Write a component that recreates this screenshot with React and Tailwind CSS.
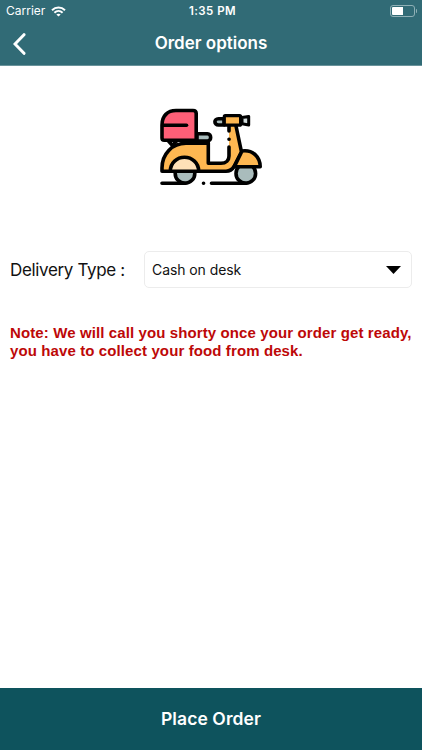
function WifiIcon() {
  return (
    <svg className="w-[15px] h-[11px]" viewBox="0 0 15 11" fill="none" stroke="white" strokeWidth="2">
      <path d="M1 4.2C4.7 .7 10.3 .7 14 4.2" />
      <path d="M3.4 6.7C5.8 4.5 9.2 4.5 11.6 6.7" />
      <path d="M7.5 10.6L5.3 8.5C6.5 7.4 8.5 7.4 9.7 8.5Z" fill="white" stroke="none" />
    </svg>
  );
}

function ScooterIcon() {
  return (
    <svg className="w-[120px] h-[95px] mr-[2px]" viewBox="0 0 120 95" fill="none" stroke="black" strokeWidth="3.6" strokeLinecap="round" strokeLinejoin="round">
      {/* wheels and ground */}
      <circle cx="35" cy="73.4" r="9.8" fill="#a9bcbc" />
      <circle cx="95.8" cy="73.4" r="9.8" fill="#a9bcbc" />
      <path d="M12 83.300H35M61.500 83.300H95.800M53.500 83.300h.1" />

      {/* body */}
      <path d="M79 26H86L91.500 52L84 67C81.500 70 80 71.200 76 71.200H12V68C12 54 22 43.300 36 43.300H58.300V63.300H71C76 63.300 79 60 79 56Z" fill="#feb751" stroke="none" />
      <path d="M86 26L91.500 52L84 66.500C82 70 80 71.200 76 71.200H12V68C12 54 22 43.300 36 43.300H58.300" />
      <path d="M58.300 43V63.300H71C76 63.300 79 60 79 56V47M79 39.200h.1M79 26V31" />
      <path d="M20.300 71.200C20.300 63 27 57.200 34.500 57.200S48.700 63 48.700 71.200Z" fill="#fee0b7" />
      <path d="M84.300 66.700L92 51C103 49.500 110 57 110.200 66.700Z" fill="#feb751" />

      {/* seat and delivery box */}
      <path d="M47 33.800H57.500C61.700 33.800 61.700 41 57.500 41H47Z" fill="#a9bcbc" />
      <path d="M18.500 41L22.500 45.500L26.500 41" fill="white" />
      <path d="M12 38V25C12 16 17.500 10.500 26 10.500H43C45.200 10.500 46.200 11.500 46.200 13.500V40.200H14.200C12.700 40.200 12 39.500 12 38Z" fill="#fe5f77" />
      <path d="M13 25.200H36.500" />

      {/* handlebar */}
      <path d="M74 18.700H68.500C63.700 18.700 63.700 25 68.500 25H74Z" fill="#a9bcbc" />
      <path d="M92 17.600L98.700 16.400V25L92 23.800Z" fill="#d3dddd" strokeWidth="3" />
      <rect x="74.300" y="15.700" width="16.300" height="9.500" rx="1" fill="#feb751" strokeWidth="3.2" />
    </svg>
  );
}

function Header() {
  return (
    <div className="h-[66px] bg-[#316b76] text-white border-b border-[#69939b]">
      <div className="h-[22px] px-[6px] grid grid-cols-3 items-center">
        <div className="flex items-center gap-[6px]">
          <span className="text-[12px] leading-none">Carrier</span>
          <WifiIcon />
        </div>
        <p className="text-[11.500px] leading-none font-semibold text-center tracking-[0.45px] pl-[3px] pt-px">1:35 PM</p>
        <div className="flex items-center justify-end -mr-px">
          <div className="w-[25px] h-[12px] border border-[#8fb0b6] rounded-[3px] p-px">
            <div className="w-[11px] h-full bg-white rounded-l-[1px]"></div>
          </div>
          <div className="w-[1.500px] h-[4px] ml-px bg-[#8fb0b6] rounded-r-full"></div>
        </div>
      </div>

      <div className="h-[43px] grid grid-cols-[60px_1fr_60px] items-center">
        <button className="pl-[13px]">
          <svg className="w-[14px] h-[22px]" viewBox="0 0 14 22" fill="none" stroke="white" strokeWidth="3" strokeLinecap="round">
            <path d="M11 1.700L2 11L11 20.300" />
          </svg>
        </button>
        <h1 className="text-[17px] leading-none font-semibold text-center">Order options</h1>
      </div>
    </div>
  );
}

export default function App() {
  return (
    <div className="h-screen flex flex-col bg-white font-['Inter',sans-serif]">
      <Header />

      <div className="flex-1">
        <div className="flex justify-center pt-[34px]">
          <ScooterIcon />
        </div>

        <div className="flex items-center mt-[56px] px-[10px]">
          <label className="w-[134px] pt-[2px] text-[17px] leading-none tracking-[-0.34px] text-[#111] whitespace-nowrap">Delivery Type :</label>
          <div className="flex-1 h-[37px] flex items-center justify-between border border-[#ececec] rounded-[5px] pl-[7px] pr-[10px]">
            <span className="text-[14px] leading-none tracking-[-0.08px] text-[#111]">Cash on desk</span>
            <svg className="w-[15px] h-[8px]" viewBox="0 0 15 8">
              <path d="M0 0H15L7.500 8Z" fill="black" />
            </svg>
          </div>
        </div>

        <p className="mt-[36px] pl-[10px] text-[15px] leading-[18px] tracking-[0.11px] font-bold text-[#bd0808] whitespace-nowrap font-['Liberation_Sans',sans-serif]">
          Note: We will call you shorty once your order get ready,
          <br />
          you have to collect your food from desk.
        </p>
      </div>

      <button className="h-[62px] pt-px bg-[#0e535d] text-white text-[17.500px] tracking-[0.08px] font-semibold">Place Order</button>
    </div>
  );
}
